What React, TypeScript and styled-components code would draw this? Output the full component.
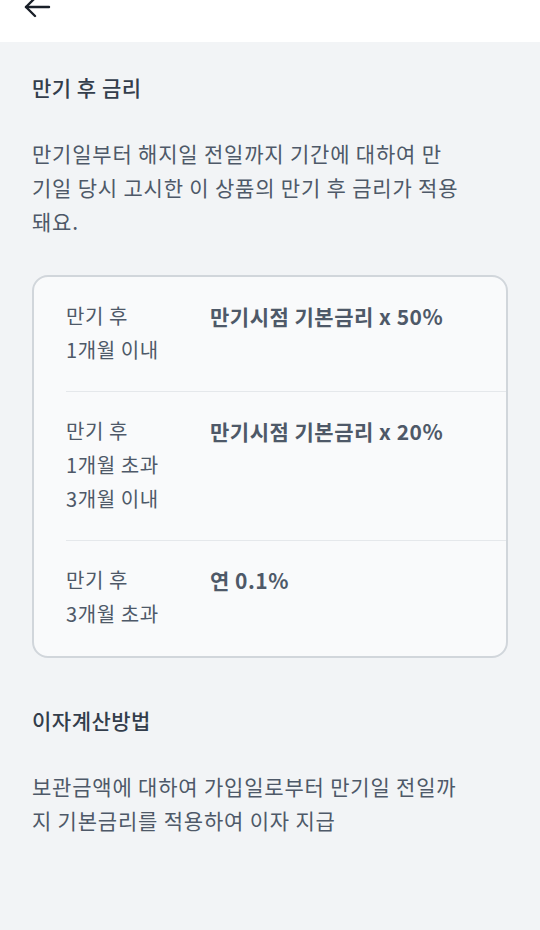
import React from 'react';
import styled, { createGlobalStyle } from 'styled-components';

const GlobalStyle = createGlobalStyle`
    html, body {
        margin: 0;
        padding: 0;
        background: #f2f4f6;
        font-family: 'Noto Sans CJK KR', 'Noto Sans', sans-serif;
        -webkit-font-smoothing: antialiased;
    }
`;

const Page = styled.div`
    width: 540px;
    min-height: 930px;
    background: #f2f4f6;
`;

const Header = styled.div`
    height: 42px;
    background: #ffffff;
    display: flex;
    align-items: flex-start;
    padding-left: 23px;
    overflow: hidden;
`;

const BackIcon = styled.svg`
    width: 28px;
    height: 28px;
    margin-top: -7px;
    color: #191f28;
`;

const Body = styled.div`
    padding: 28px 32px 0;
    display: flex;
    flex-direction: column;
`;

const Title = styled.h2<{ $top?: number }>`
    margin: ${(p) => p.$top ?? 0}px 0 0;
    font-size: 21px;
    line-height: 34px;
    font-weight: 500;
    letter-spacing: 0.5px;
    color: #333d4b;
`;

const Paragraph = styled.p`
    margin: 32px 0 0;
    max-width: 427px;
    font-size: 21px;
    line-height: 34px;
    font-weight: 400;
    letter-spacing: 0.8px;
    word-break: break-all;
    color: #4e5968;
`;

const Card = styled.div`
    margin-top: 37px;
    background: #f9fafb;
    border: 2px solid #d1d6db;
    border-radius: 16px;
    padding-left: 32px;
`;

const Row = styled.div<{ $last?: boolean }>`
    display: grid;
    grid-template-columns: 144px 1fr;
    padding: 22px 0 ${(p) => (p.$last ? 25 : 24)}px;
    border-bottom: ${(p) => (p.$last ? 'none' : '1px solid #e5e8eb')};
`;

const Label = styled.div`
    font-size: 20px;
    line-height: 34px;
    letter-spacing: 0.6px;
    color: #4e5968;
    white-space: pre-line;
`;

const Value = styled.div`
    font-size: 21px;
    line-height: 34px;
    font-weight: 700;
    letter-spacing: 0.5px;
    color: #4e5968;
`;

const rates = [
    { label: '만기 후\n1개월 이내', value: '만기시점 기본금리 x 50%' },
    { label: '만기 후\n1개월 초과\n3개월 이내', value: '만기시점 기본금리 x 20%' },
    { label: '만기 후\n3개월 초과', value: '연 0.1%' },
];

export default function App() {
    return (
        <Page>
            <GlobalStyle />
            <Header>
                <BackIcon viewBox="0 0 28 28" fill="none" stroke="currentColor" strokeWidth={2.4} strokeLinecap="round" strokeLinejoin="round">
                    <path d="M3 14H26" />
                    <path d="M12 5L3 14L12 23" />
                </BackIcon>
            </Header>
            <Body>
                <Title>만기 후 금리</Title>
                <Paragraph>
                    만기일부터 해지일 전일까지 기간에 대하여 만기일 당시 고시한 이 상품의 만기 후 금리가 적용돼요.
                </Paragraph>
                <Card>
                    {rates.map((r, i) => (
                        <Row key={r.value} $last={i === rates.length - 1}>
                            <Label>{r.label}</Label>
                            <Value>{r.value}</Value>
                        </Row>
                    ))}
                </Card>
                <Title $top={45}>이자계산방법</Title>
                <Paragraph>보관금액에 대하여 가입일로부터 만기일 전일까지 기본금리를 적용하여 이자 지급</Paragraph>
            </Body>
        </Page>
    );
}
